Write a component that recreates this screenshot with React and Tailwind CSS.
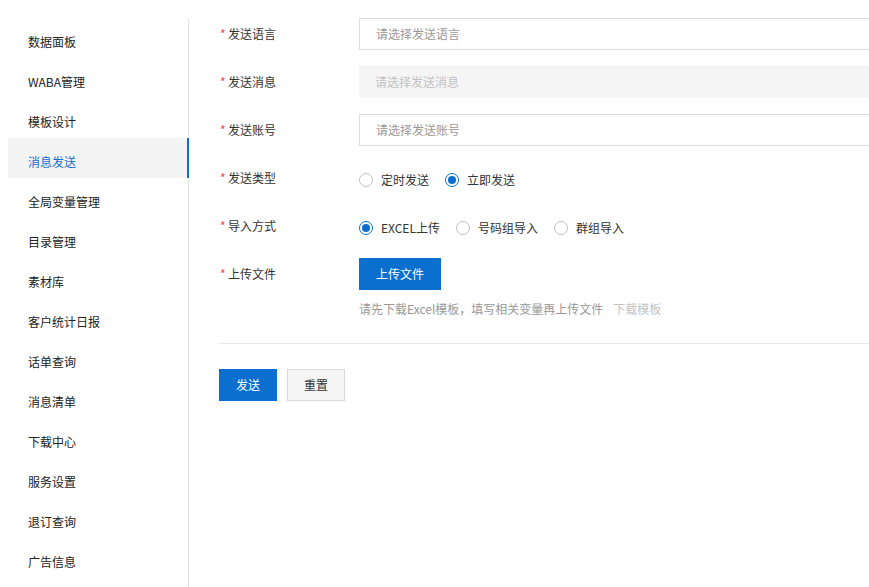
import React, { useState } from 'react';

const menu = [
  '数据面板',
  'WABA管理',
  '模板设计',
  '消息发送',
  '全局变量管理',
  '目录管理',
  '素材库',
  '客户统计日报',
  '话单查询',
  '消息清单',
  '下载中心',
  '服务设置',
  '退订查询',
  '广告信息',
];

const Radio = ({ checked, label, onClick }) => (
  <label className="flex items-center cursor-pointer mr-[16px]" onClick={onClick}>
    <span
      className={`w-[14px] h-[14px] rounded-full border flex items-center justify-center bg-white ${
        checked ? 'border-[#0b6fd0]' : 'border-[#bfbfbf]'
      }`}
    >
      {checked && <span className="w-[8px] h-[8px] rounded-full bg-[#0b6fd0]" />}
    </span>
    <span className="ml-[8px] text-[12px] text-[#333]">{label}</span>
  </label>
);

const Field = ({ label, children, align = 'center' }) => (
  <div className={`flex ${align === 'center' ? 'items-center' : 'items-start'} mb-4`}>
    <div className="w-[140px] shrink-0 h-8 flex items-center text-[12px] text-[#333]">
      <span className="text-[#e5484d] w-[9px] pl-[1px]">*</span>
      <span>{label}</span>
    </div>
    <div className="flex-1">{children}</div>
  </div>
);

export default function App() {
  const [active, setActive] = useState(3);
  const [sendType, setSendType] = useState('now');
  const [importType, setImportType] = useState('excel');

  return (
    <div
      className="flex h-screen w-full overflow-hidden bg-white"
      style={{ fontFamily: '"Noto Sans CJK SC", "Noto Sans", sans-serif' }}
    >
      {/* Sidebar */}
      <aside className="w-[189px] shrink-0 pt-[18px]">
        <div className="h-full border-r border-[#e3e3e3]">
          {menu.map((item, i) => (
            <div
              key={item}
              onClick={() => setActive(i)}
              className={`ml-2 h-10 pl-5 pt-2 flex items-center text-[12px] cursor-pointer ${
                i === active
                  ? 'bg-[#f4f4f4] text-[#0b6fd0] border-r-2 border-[#0b6fd0] -mr-px'
                  : 'text-[#222]'
              }`}
            >
              {item}
            </div>
          ))}
        </div>
      </aside>

      {/* Main */}
      <main className="flex-1 pl-[30px] pt-[18px] min-w-0">
        <Field label="发送语言">
          <div className="h-8 w-[560px] border border-[#dcdcdc] flex items-center px-4 text-[12px] text-[#999]">
            请选择发送语言
          </div>
        </Field>
        <Field label="发送消息">
          <div className="h-8 w-[560px] bg-[#f5f5f5] flex items-center px-4 text-[12px] text-[#c2c2c2]">
            请选择发送消息
          </div>
        </Field>
        <Field label="发送账号">
          <div className="h-8 w-[560px] border border-[#dcdcdc] flex items-center px-4 text-[12px] text-[#999]">
            请选择发送账号
          </div>
        </Field>
        <Field label="发送类型">
          <div className="flex items-center h-8 pt-[4px]">
            <Radio label="定时发送" checked={sendType === 'timed'} onClick={() => setSendType('timed')} />
            <Radio label="立即发送" checked={sendType === 'now'} onClick={() => setSendType('now')} />
          </div>
        </Field>
        <Field label="导入方式">
          <div className="flex items-center h-8 pt-[4px]">
            <Radio label="EXCEL上传" checked={importType === 'excel'} onClick={() => setImportType('excel')} />
            <Radio label="号码组导入" checked={importType === 'number'} onClick={() => setImportType('number')} />
            <Radio label="群组导入" checked={importType === 'group'} onClick={() => setImportType('group')} />
          </div>
        </Field>
        <Field label="上传文件" align="start">
          <button className="h-8 w-[82px] bg-[#0b6fd0] text-white text-[12px]">上传文件</button>
          <div className="mt-[12px] text-[12px] text-[#999] leading-[14px]">
            请先下载Excel模板，填写相关变量再上传文件
            <span className="ml-[10px] text-[#c4c4c4] cursor-pointer">下载模板</span>
          </div>
        </Field>

        <div className="border-t border-[#e8e8e8] mt-[27px] pt-[25px] flex gap-[10px]">
          <button className="h-8 w-[58px] bg-[#0b6fd0] text-white text-[12px]">发送</button>
          <button className="h-8 w-[58px] bg-[#f5f5f5] border border-[#d9d9d9] text-[#333] text-[12px]">
            重置
          </button>
        </div>
      </main>
    </div>
  );
}
